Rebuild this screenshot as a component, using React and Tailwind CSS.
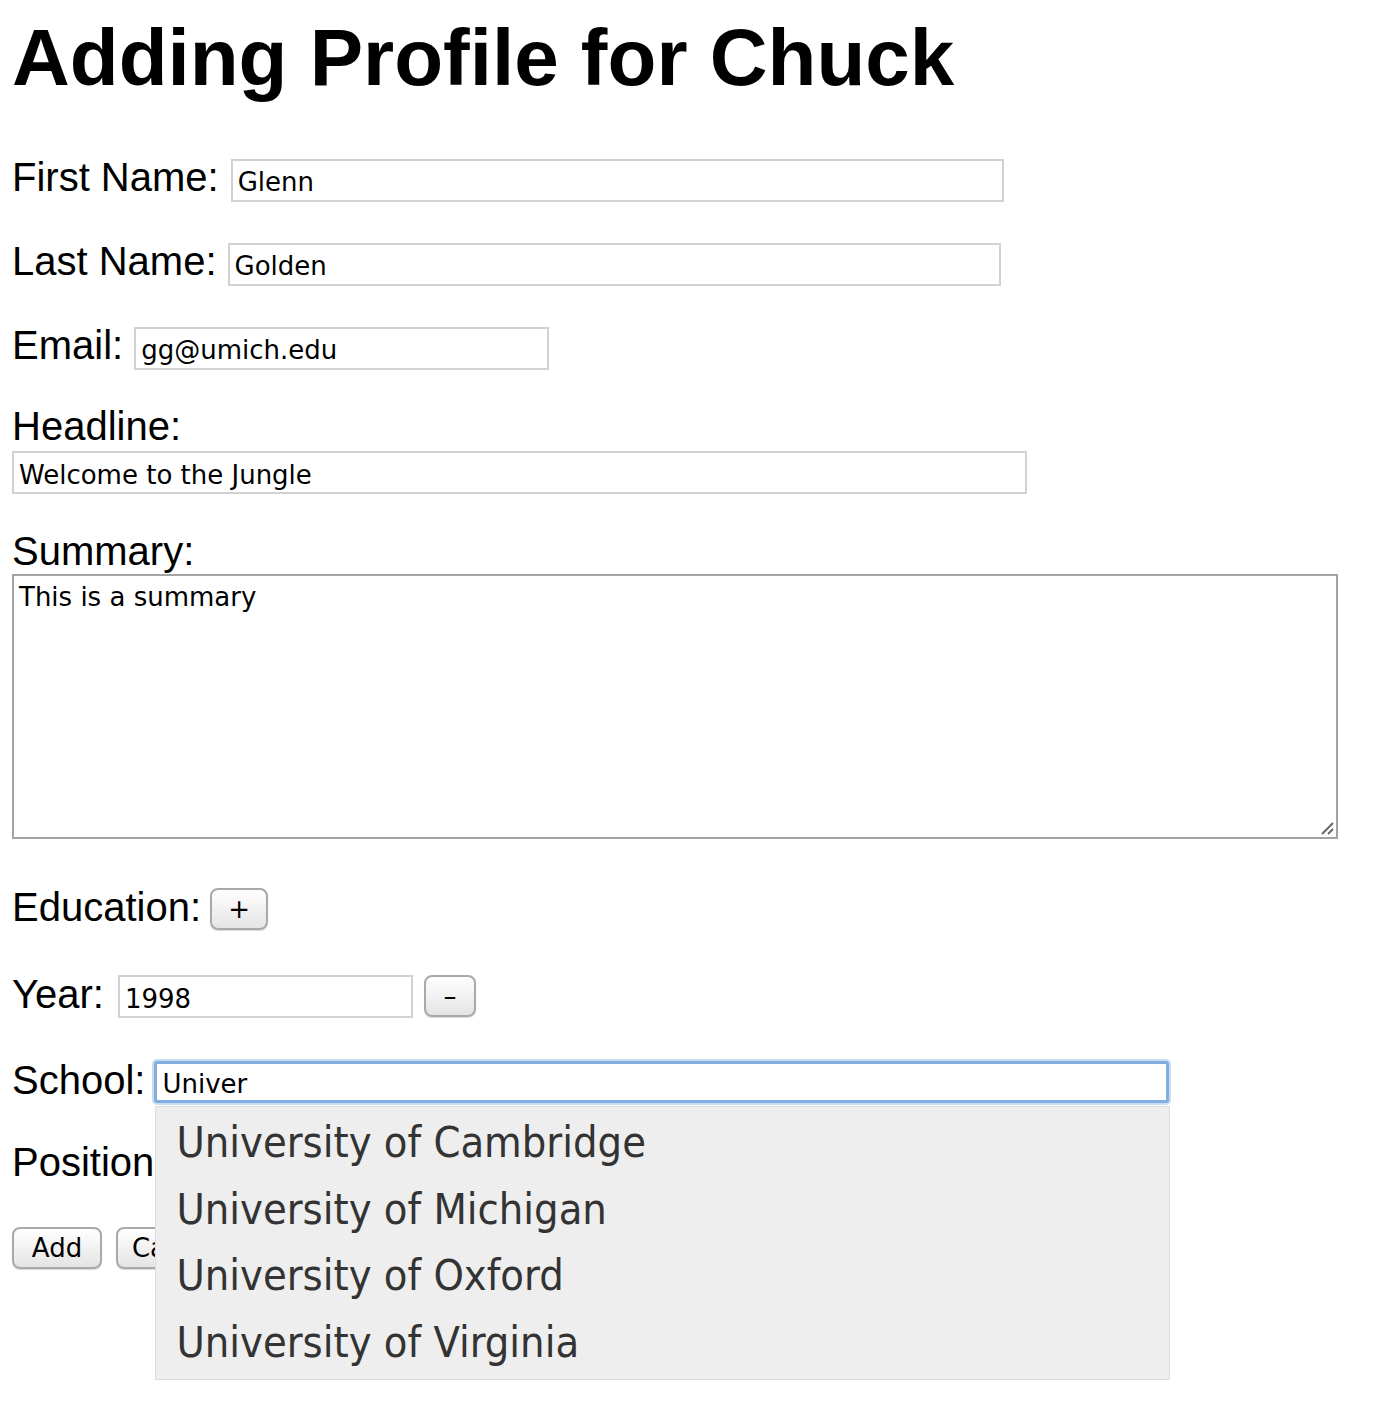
import React, { useState } from 'react';

const LABEL = "font-['Liberation_Sans',Arial,sans-serif] text-[40px] leading-[46px] text-black";
const FIELD = "font-['DejaVu_Sans',sans-serif] text-[26px] text-black bg-white";
const INPUT = `${FIELD} h-[43px] px-[5px] pt-[4px] border-2 border-[#d2d2d2] outline-none`;
const BUTTON =
  "font-['DejaVu_Sans',sans-serif] text-[26px] text-black h-[42px] rounded-[8px] border-2 border-[#a9a9a9] bg-gradient-to-b from-white to-[#e4e4e4] shadow-[0_1px_1px_rgba(0,0,0,0.15)] flex items-center justify-center";

const SCHOOLS = [
  'University of Cambridge',
  'University of Michigan',
  'University of Oxford',
  'University of Virginia',
];

const App = () => {
  const [first, setFirst] = useState('Glenn');
  const [last, setLast] = useState('Golden');
  const [email, setEmail] = useState('gg@umich.edu');
  const [headline, setHeadline] = useState('Welcome to the Jungle');
  const [summary, setSummary] = useState('This is a summary');
  const [year, setYear] = useState('1998');
  const [school, setSchool] = useState('Univer');

  return (
    <div className="min-h-screen bg-white pl-[12px] pb-10">
      <h1 className="font-['Liberation_Sans',Arial,sans-serif] text-[80px] leading-[92px] font-bold text-black pt-[12px]">
        Adding Profile for Chuck
      </h1>

      <div className="mt-[50px]">
        <div className="h-[84px] flex items-baseline">
          <span className={LABEL}>First Name:</span>
          <input className={`${INPUT} ml-[12px] w-[773px]`} value={first} onChange={(e) => setFirst(e.target.value)} />
        </div>
        <div className="h-[84px] flex items-baseline">
          <span className={LABEL}>Last Name:</span>
          <input className={`${INPUT} ml-[11px] w-[773px]`} value={last} onChange={(e) => setLast(e.target.value)} />
        </div>
        <div className="h-[81px] flex items-baseline">
          <span className={LABEL}>Email:</span>
          <input className={`${INPUT} ml-[11px] w-[415px]`} value={email} onChange={(e) => setEmail(e.target.value)} />
        </div>
      </div>

      <div className={LABEL}>Headline:</div>
      <input
        className={`${INPUT} mt-[2px] w-[1015px] h-[42px] block`}
        value={headline}
        onChange={(e) => setHeadline(e.target.value)}
      />

      <div className={`${LABEL} mt-[34px]`}>Summary:</div>
      <div className="relative w-[1326px]">
        <textarea
          className={`${FIELD} block w-full h-[265px] border-2 border-[#a3a3a3] px-[5px] pt-[5px] leading-[32px] outline-none resize-none`}
          value={summary}
          onChange={(e) => setSummary(e.target.value)}
        />
        {/* resize grip */}
        <svg className="absolute right-[3px] bottom-[3px]" width="16" height="16" viewBox="0 0 16 16">
          <path d="M14 3 L3 14 M14 9 L9 14" stroke="#6a6a6a" strokeWidth="2" fill="none" />
        </svg>
      </div>

      <div className="flex items-end mt-[45px]">
        <span className={LABEL}>Education:</span>
        <button className={`${BUTTON} ml-[9px] w-[58px]`}>+</button>
      </div>

      <div className="flex items-end mt-[41px]">
        <span className={`${LABEL} mb-[1px]`}>Year:</span>
        <input className={`${INPUT} ml-[14px] w-[295px]`} value={year} onChange={(e) => setYear(e.target.value)} />
        <button className={`${BUTTON} ml-[11px] w-[52px] mb-[1px]`}>–</button>
      </div>

      <div className="flex items-end mt-[39px]">
        <span className={LABEL}>School:</span>
        <div className="relative ml-[9px]">
          <input
            className={`${FIELD} h-[42px] w-[1015px] px-[5px] pt-[3px] border-[3px] border-[#82ade0] rounded-[3px] shadow-[0_0_0_2px_#cadcf2] outline-none`}
            value={school}
            onChange={(e) => setSchool(e.target.value)}
          />
          <ul className="absolute left-[1px] top-[45px] w-[1015px] bg-[#eeeeee] border border-[#dddddd] pt-[2px] pb-[4px] z-10">
            {SCHOOLS.map((s) => (
              <li
                key={s}
                className="font-['DejaVu_Sans_Condensed','DejaVu_Sans',sans-serif] text-[43px] leading-[66.5px] text-[#333333] pl-[20px]"
              >
                {s}
              </li>
            ))}
          </ul>
        </div>
      </div>

      <div className={`${LABEL} mt-[36px]`}>Position:</div>

      <div className="flex items-center gap-[14px] mt-[42px]">
        <button className={`${BUTTON} w-[90px]`}>Add</button>
        <button className={`${BUTTON} w-[120px]`}>Cancel</button>
      </div>
    </div>
  );
};

export default App;
